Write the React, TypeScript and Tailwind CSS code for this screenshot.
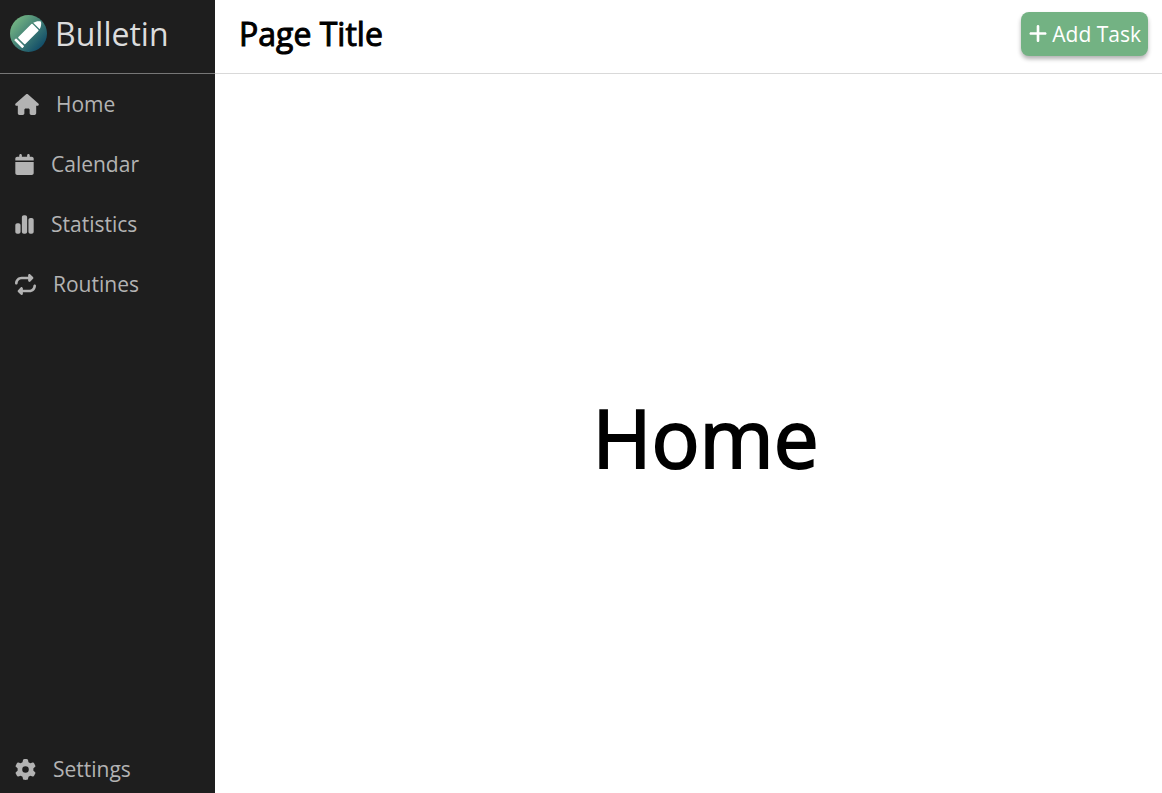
import type { ReactNode } from "react";
import { FaHouse, FaCalendar, FaChartSimple, FaRepeat, FaGear, FaPlus } from "react-icons/fa6";

function Logo() {
  return (
    <svg viewBox="0 0 37 37" className="size-[37px] shrink-0" aria-hidden="true">
      <defs>
        <linearGradient id="logo-fill" x1="0.1" y1="0.15" x2="0.88" y2="0.88">
          <stop offset="0" stopColor="#74b583" />
          <stop offset="1" stopColor="#0f4a68" />
        </linearGradient>
      </defs>
      <circle cx="18.5" cy="18.5" r="18.5" fill="url(#logo-fill)" />
      <g transform="translate(18.5 18.9) rotate(45)" fill="#fff">
        <path d="M-4.6 -11.2C-4 -13.8 -1.8 -16.8 0 -17.4C1.8 -16.8 4 -13.8 4.6 -11.2Z" />
        <rect x="-4.9" y="-9.8" width="9.8" height="20" rx="0.8" />
        <rect x="-5.8" y="11.8" width="11.6" height="2.8" rx="0.7" />
      </g>
    </svg>
  );
}

function NavLink({ href, icon, label }: { href: string; icon: ReactNode; label: string }) {
  return (
    <a href={href} className="flex h-15 items-center gap-[17px] pl-[15px] text-[21px] text-[#b3b3b3]">
      {icon}
      <span className="pt-0.5">{label}</span>
    </a>
  );
}

export default function App() {
  return (
    <div className="flex h-screen bg-white font-['Open_Sans',sans-serif] text-black">
      <aside className="flex w-[215px] shrink-0 flex-col bg-[#1e1e1e]">
        <div className="flex h-[74px] shrink-0 items-center gap-2 border-b border-[#777] pb-1.5 pl-[10px] text-[32px] text-[#dcdcdc]">
          <Logo />
          <span>Bulletin</span>
        </div>
        <nav className="flex flex-1 flex-col justify-between">
          <div>
            <NavLink href="#home" label="Home" icon={<FaHouse className="h-[21px] w-6" />} />
            <NavLink href="#calendar" label="Calendar" icon={<FaCalendar className="h-[21px] w-[19px]" />} />
            <NavLink href="#statistics" label="Statistics" icon={<FaChartSimple className="h-[21px] w-[19px]" />} />
            <NavLink href="#routines" label="Routines" icon={<FaRepeat className="size-[21px]" />} />
          </div>
          <div className="-mb-1.5">
            <NavLink href="#settings" label="Settings" icon={<FaGear className="size-[21px]" />} />
          </div>
        </nav>
      </aside>
      <div className="flex min-w-0 flex-1 flex-col">
        <header className="flex h-[74px] shrink-0 items-center justify-between border-b border-[#d9d9d9] pr-[14px] pb-1.5 pl-6">
          <h1 className="text-[32px] [-webkit-text-stroke:1px_black]">Page Title</h1>
          <button
            type="button"
            className="flex h-11 items-center gap-1 rounded-lg bg-[#73b283] px-[7px] text-[21px] text-white shadow-[0_3px_4px_rgba(0,0,0,0.3)]"
          >
            <FaPlus className="h-[21px] w-5" />
            <span className="pt-0.5">Add Task</span>
          </button>
        </header>
        <main className="flex flex-1 items-center justify-center pt-1.5 pl-[34px]">
          <h2 className="text-[80px] leading-none [-webkit-text-stroke:2px_black]">Home</h2>
        </main>
      </div>
    </div>
  );
}
